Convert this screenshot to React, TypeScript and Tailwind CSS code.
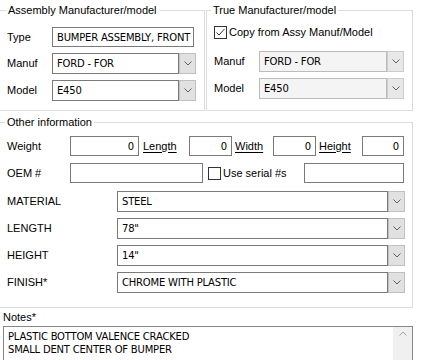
import React from 'react';

const fieldFont = "font-['DejaVu_Sans',sans-serif] text-[10px] tracking-[-0.2px] text-black";

function Chevron({ up = false, color = '#606060' }: { up?: boolean; color?: string }) {
  return (
    <svg width="8" height="5" viewBox="0 0 8 5">
      <polyline
        points={up ? '0.5,4.5 4,1 7.5,4.5' : '0.5,0.5 4,4 7.5,0.5'}
        fill="none"
        stroke={color}
        strokeWidth="1"
      />
    </svg>
  );
}

function Check({ checked }: { checked?: boolean }) {
  return (
    <div className="w-[13px] h-[13px] border border-[#333333] bg-white flex items-center justify-center shrink-0">
      {checked && (
        <svg width="11" height="11" viewBox="0 0 11 11">
          <polyline points="1.5,5.5 4,8 9.5,2" fill="none" stroke="#333333" strokeWidth="1" />
        </svg>
      )}
    </div>
  );
}

function TextBox({ value = '', className = '', right = false }: { value?: string; className?: string; right?: boolean }) {
  return (
    <div
      className={`h-[20px] border border-[#7a7a7a] bg-white flex items-center whitespace-nowrap overflow-hidden ${
        right ? 'justify-end pr-[4px]' : 'pl-[4px]'
      } ${fieldFont} ${className}`}
    >
      {value}
    </div>
  );
}

function Combo({ value, className = '', disabled = false }: { value: string; className?: string; disabled?: boolean }) {
  return (
    <div className={`flex h-[21px] ${className}`}>
      <div
        className={`flex-1 border flex items-center pl-[4px] whitespace-nowrap overflow-hidden ${fieldFont} ${
          disabled ? 'border-[#bcbcbc] bg-[#f4f4f4]' : 'border-[#7a7a7a] bg-white'
        }`}
      >
        {value}
      </div>
      <div
        className={`w-[17px] border flex items-center justify-center ${
          disabled ? 'border-[#cccccc] bg-[#e8e8e8]' : 'border-[#c0c0c0] bg-[#e1e1e1]'
        }`}
      >
        <Chevron />
      </div>
    </div>
  );
}

function GroupLabel({ children, className = '' }: { children: React.ReactNode; className?: string }) {
  return (
    <span className={`absolute top-[-8px] bg-white px-[2px] leading-[14px] ${className}`}>{children}</span>
  );
}

export default function App() {
  return (
    <div className="w-[435px] h-[360px] bg-white overflow-hidden font-['Liberation_Sans',Arial,sans-serif] text-[11px] text-black">
      {/* Top two group boxes */}
      <div className="flex gap-[1px] pt-[10px]">
        <div className="relative w-[205px] h-[101px] border-t border-r border-b border-[#dcdcdc] pl-[7px] pt-[16px]">
          <GroupLabel className="left-[6px]">Assembly Manufacturer/model</GroupLabel>
          <div className="flex flex-col gap-[6px]">
            <div className="flex items-center">
              <span className="w-[45px]">Type</span>
              <TextBox value="BUMPER ASSEMBLY, FRONT" className="w-[142px] h-[19px]" />
            </div>
            <div className="flex items-center">
              <span className="w-[45px]">Manuf</span>
              <Combo value="FORD - FOR" className="w-[144px]" />
            </div>
            <div className="flex items-center">
              <span className="w-[45px]">Model</span>
              <Combo value="E450" className="w-[144px]" />
            </div>
          </div>
        </div>

        <div className="relative w-[207px] h-[101px] border border-[#dcdcdc] pl-[7px] pt-[15px]">
          <GroupLabel className="left-[4px]">True Manufacturer/model</GroupLabel>
          <div className="flex items-center gap-[2px] h-[13px]">
            <Check checked />
            <span>Copy from Assy Manuf/Model</span>
          </div>
          <div className="flex flex-col gap-[6px] mt-[12px]">
            <div className="flex items-center">
              <span className="w-[45px]">Manuf</span>
              <Combo value="FORD - FOR" className="w-[145px]" disabled />
            </div>
            <div className="flex items-center">
              <span className="w-[45px]">Model</span>
              <Combo value="E450" className="w-[145px]" disabled />
            </div>
          </div>
        </div>
      </div>

      {/* Other information */}
      <div className="relative mt-[11px] w-[413px] h-[186px] border-t border-r border-b border-[#dcdcdc] pl-[7px] pt-[13px]">
        <GroupLabel className="left-[5px]">Other information</GroupLabel>

        <div className="flex items-center h-[20px]">
          <span className="w-[63px]">Weight</span>
          <TextBox value="0" right className="w-[69px]" />
          <span className="w-[50px] pl-[4px] underline underline-offset-2">Length</span>
          <TextBox value="0" right className="w-[43px]" />
          <span className="w-[41px] pl-[3px] underline underline-offset-2">Width</span>
          <TextBox value="0" right className="w-[43px]" />
          <span className="w-[46px] pl-[3px] underline underline-offset-2">Height</span>
          <TextBox value="0" right className="w-[42px]" />
        </div>

        <div className="flex items-center h-[20px] mt-[7px]">
          <span className="w-[63px]">OEM #</span>
          <TextBox className="w-[133px]" />
          <div className="ml-[5px] flex items-center gap-[2px] w-[96px]">
            <Check />
            <span>Use serial #s</span>
          </div>
          <TextBox className="w-[100px]" />
        </div>

        <div className="flex flex-col gap-[6px] mt-[8px]">
          {[
            ['MATERIAL', 'STEEL'],
            ['LENGTH', '78"'],
            ['HEIGHT', '14"'],
            ['FINISH*', 'CHROME WITH PLASTIC'],
          ].map(([label, value]) => (
            <div key={label} className="flex items-center">
              <span className="w-[110px]">{label}</span>
              <Combo value={value} className="w-[288px]" />
            </div>
          ))}
        </div>
      </div>

      {/* Notes */}
      <div className="pl-[3px] mt-[2px]">
        <div className="leading-[14px]">Notes*</div>
        <div className="mt-[2px] w-[410px] h-[60px] border border-[#828790] bg-white flex">
          <div className={`flex-1 pl-[4px] pt-[3px] leading-[13px] ${fieldFont}`}>
            <div>PLASTIC BOTTOM VALENCE CRACKED</div>
            <div>SMALL DENT CENTER OF BUMPER</div>
          </div>
          <div className="w-[19px] bg-[#f0f0f0] flex justify-center pt-[4px]">
            <Chevron up color="#a3a3a3" />
          </div>
        </div>
      </div>
    </div>
  );
}
